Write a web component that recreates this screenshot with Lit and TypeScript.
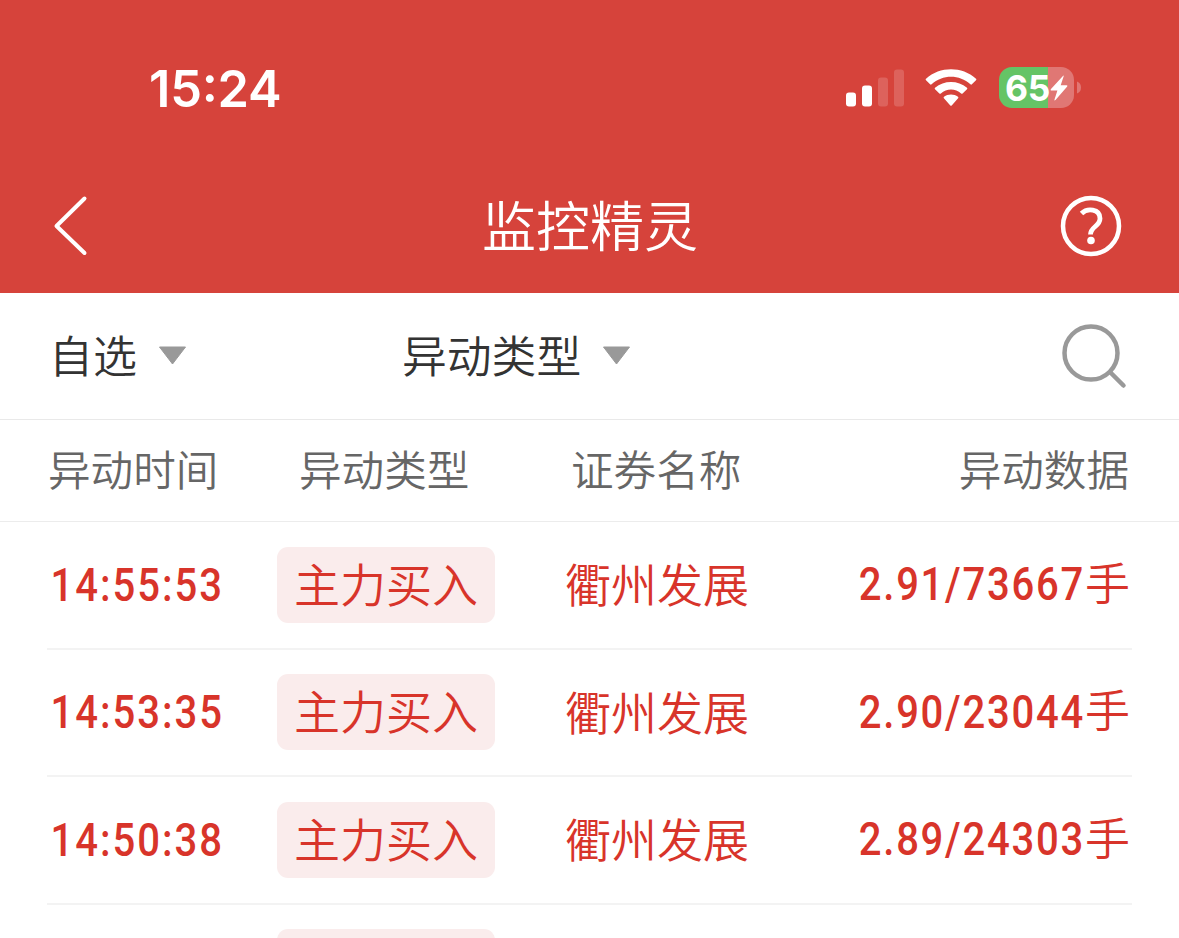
import { LitElement, html, css } from 'lit'
import { customElement, property } from 'lit/decorators.js'

interface Alert {
  time: string
  type: string
  name: string
  data: string
}

const ALERTS: Alert[] = [
  { time: '14:55:53', type: '主力买入', name: '衢州发展', data: '2.91/73667' },
  { time: '14:53:35', type: '主力买入', name: '衢州发展', data: '2.90/23044' },
  { time: '14:50:38', type: '主力买入', name: '衢州发展', data: '2.89/24303' },
]

@customElement('status-bar')
export class StatusBar extends LitElement {
  static styles = css`
    :host {
      display: flex;
      align-items: center;
      justify-content: space-between;
      height: 176px;
      box-sizing: border-box;
      padding: 0 98px 0 149px;
      color: #fff;
      font-family: Inter, sans-serif;
      font-feature-settings: 'case';
    }

    .clock {
      padding-top: 2px;
      font-size: 50.5px;
      font-weight: 600;
      line-height: 60px;
      letter-spacing: -0.2px;
    }

    .indicators {
      display: flex;
      align-items: center;
      padding-bottom: 1px;
    }

    .signal {
      margin-right: 20px;
    }

    .wifi {
      margin-right: 22px;
    }

    svg {
      display: block;
    }

    .battery {
      display: flex;
      align-items: center;
      justify-content: center;
      width: 75px;
      height: 41px;
      border-radius: 13px;
      background: linear-gradient(to right, #65c466 65%, #e07774 65%);
    }

    .level {
      padding-top: 1px;
      font-size: 35.5px;
      font-weight: 700;
      line-height: 41px;
      letter-spacing: -0.3px;
    }

    .cap {
      margin-left: 3px;
    }
  `

  render() {
    return html`
      <div class="clock">15:24</div>
      <div class="indicators">
        <svg class="signal" width="59" height="38" viewBox="0 0 59 38" fill="#fff">
          <rect x="0" y="23.5" width="10" height="14" rx="3" />
          <rect x="16" y="16.5" width="10" height="21" rx="3" />
          <rect x="32" y="8.5" width="10" height="29" rx="3" opacity=".17" />
          <rect x="48" y="0.5" width="10" height="37" rx="3" opacity=".17" />
        </svg>
        <svg class="wifi" width="52" height="38" viewBox="0 0 52 38" fill="#fff">
          <path d="M1 11.2Q.3 10.5 1 9.8C15 -2.8 37 -2.8 51 9.8Q51.700 10.500 51 11.200L46.900 15.300Q46.200 16 45.400 15.300C34.500 5.300 17.500 5.300 6.600 15.300Q5.800 16 5.100 15.300Z" />
          <path d="M10 20.200Q9.300 19.500 10 18.800C19 10.900 33 10.900 42 18.800Q42.700 19.500 42 20.200L37.600 24.500Q36.900 25.200 36.100 24.500C30.500 19.300 21.500 19.300 15.900 24.500Q15.100 25.200 14.400 24.500Z" />
          <path d="M18.900 29.200Q18.200 28.500 19 27.800C23 24.600 29 24.600 33 27.800Q33.800 28.500 33.100 29.200L26.700 36.400Q26 37.100 25.300 36.400Z" />
        </svg>
        <div class="battery">
          <span class="level">65</span>
          <svg width="18" height="26" viewBox="0 0 18 26" fill="#fff">
            <path d="M12.700 1.200Q14.200 -.2 13.500 1.800L10.700 10.200H16.500Q18 10.300 17 11.700L5.500 25Q4 26.200 4.600 24.300L7.400 15.600H1.500Q.1 15.400 1 14.100Z" />
          </svg>
        </div>
        <svg class="cap" width="4" height="13" viewBox="0 0 4 13">
          <path d="M0 .5Q4 2 4 6.500T0 12.500Z" fill="#e07774" />
        </svg>
      </div>
    `
  }
}

@customElement('alert-row')
export class AlertRow extends LitElement {
  static styles = css`
    :host {
      display: block;
      height: 127.5px;
      box-sizing: border-box;
      padding: 0 47px;
    }

    .row {
      display: grid;
      grid-template-columns: 230px 288px 1fr auto;
      align-items: center;
      height: 100%;
      box-sizing: border-box;
      border-bottom: 2px solid #f3f3f3;
      color: #d8342a;
      font-size: 46px;
      line-height: 60px;
      white-space: nowrap;
    }

    /* Roboto narrowed to the proportions of DIN numerals */
    .number {
      font-family: Roboto, sans-serif;
      font-weight: 500;
      letter-spacing: 2.3px;
      transform: scaleX(0.87);
    }

    .time {
      padding-left: 4px;
      transform-origin: left;
    }

    .badge {
      display: flex;
      align-items: center;
      justify-content: center;
      width: 218px;
      height: 76px;
      box-sizing: border-box;
      padding: 0 0 6px 0;
      border-radius: 11px;
      background: #faecec;
    }

    .name {
      padding-bottom: 5px;
    }

    .data {
      display: flex;
      align-items: center;
      padding-right: 2px;
    }

    .data .number {
      padding-bottom: 1px;
      letter-spacing: 2px;
      transform-origin: right;
    }

    .unit {
      padding-bottom: 6px;
      font-size: 45px;
    }
  `

  @property({ type: String }) time = ''
  @property({ type: String }) type = ''
  @property({ type: String }) name = ''
  @property({ type: String }) data = ''

  render() {
    return html`
      <div class="row">
        <div class="number time">${this.time}</div>
        <div><div class="badge">${this.type}</div></div>
        <div class="name">${this.name}</div>
        <div class="data">
          <span class="number">${this.data}</span>
          <span class="unit">${this.data ? '手' : ''}</span>
        </div>
      </div>
    `
  }
}

@customElement('app-root')
export class AppRoot extends LitElement {
  static styles = css`
    :host {
      display: block;
      height: 938px;
      overflow: hidden;
      background: #fff;
      font-family: 'Noto Sans CJK SC', sans-serif;
      font-weight: 350;
    }

    svg {
      display: block;
    }

    .top {
      height: 293px;
      background: #d6433b;
    }

    .nav {
      display: grid;
      grid-template-columns: 66px 1fr 66px;
      align-items: center;
      height: 100px;
      padding: 0 55px 0 52px;
      color: #fff;
    }

    .title {
      padding: 0 0 4px 4px;
      text-align: center;
      font-size: 54px;
      line-height: 80px;
    }

    .help {
      justify-self: end;
    }

    .filters {
      display: grid;
      grid-template-columns: 353px 1fr auto;
      align-items: center;
      height: 127px;
      box-sizing: border-box;
      padding: 2px 51px 0 49px;
      border-bottom: 1px solid #e9e9e9;
      color: #333;
      font-size: 44.8px;
      line-height: 64px;
    }

    .filter {
      display: flex;
      align-items: center;
      gap: 21px;
      padding-bottom: 2px;
    }

    .filter span {
      padding-bottom: 4px;
    }

    .filter.watchlist {
      font-size: 44px;
    }

    .head {
      display: grid;
      grid-template-columns: 251px 272px 1fr auto;
      align-items: center;
      height: 102px;
      box-sizing: border-box;
      padding: 0 50px 5px 48px;
      border-bottom: 1px solid #ececec;
      color: #666;
      font-size: 42.6px;
      line-height: 60px;
    }
  `

  private arrow() {
    return html`
      <svg width="29" height="20" viewBox="0 0 29 20">
        <path d="M1.500 1H27.500L14.500 18Z" fill="#999" stroke="#999" stroke-linejoin="round" />
      </svg>
    `
  }

  render() {
    return html`
      <div class="top">
        <status-bar></status-bar>
        <div class="nav">
          <svg width="37" height="62" viewBox="0 0 37 62" fill="none" stroke="#fff" stroke-width="4" stroke-linecap="round" stroke-linejoin="round">
            <path d="M32.500 3.500L4.500 31L32.500 58" />
          </svg>
          <div class="title">监控精灵</div>
          <svg class="help" width="66" height="62" viewBox="0 0 66 62" fill="none" stroke="#fff">
            <circle cx="33" cy="31" r="28" stroke-width="4.500" />
            <path d="M23.500 18.500C29 13 42 13.500 42 23.500C42 31.500 32.500 31.500 32.500 39.500" stroke-width="4.800" />
            <circle cx="33" cy="45.500" r="3.800" fill="#fff" stroke="none" />
          </svg>
        </div>
      </div>
      <div class="filters">
        <div class="filter watchlist"><span>自选</span>${this.arrow()}</div>
        <div class="filter"><span>异动类型</span>${this.arrow()}</div>
        <svg width="66" height="66" viewBox="0 0 66 66" fill="none" stroke="#999" stroke-width="4.500" stroke-linecap="round">
          <circle cx="29" cy="29" r="26.500" />
          <path d="M48.500 48.500L61.500 61.500" />
        </svg>
      </div>
      <div class="head">
        <div>异动时间</div>
        <div>异动类型</div>
        <div>证券名称</div>
        <div>异动数据</div>
      </div>
      ${ALERTS.map(
        (a) => html`<alert-row .time=${a.time} .type=${a.type} .name=${a.name} .data=${a.data}></alert-row>`
      )}
      <alert-row></alert-row>
    `
  }
}

declare global {
  interface HTMLElementTagNameMap {
    'status-bar': StatusBar
    'alert-row': AlertRow
    'app-root': AppRoot
  }
}
